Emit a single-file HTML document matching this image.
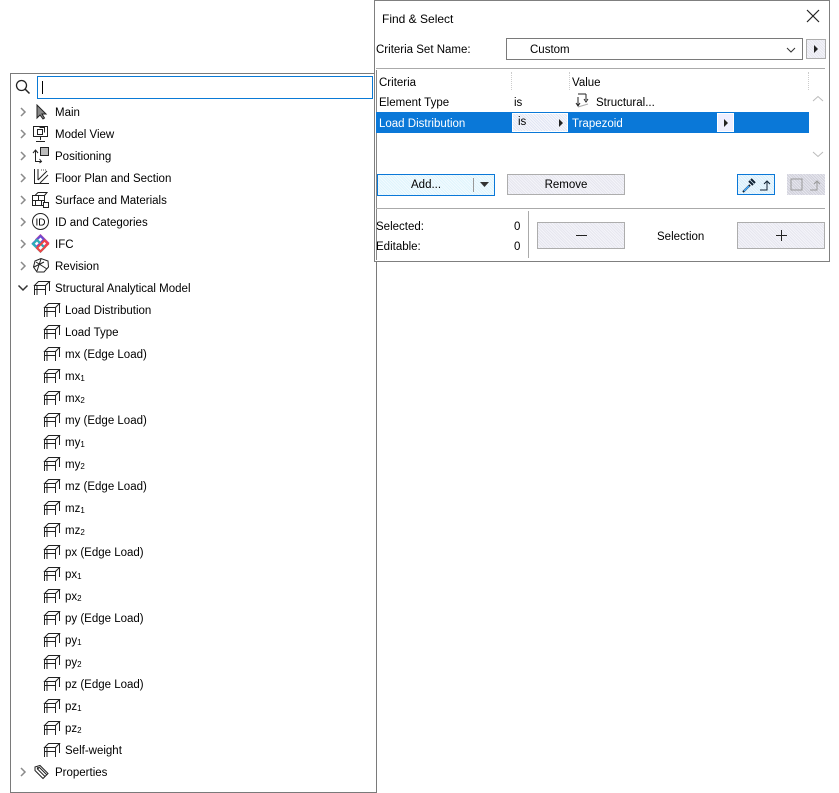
<!DOCTYPE html>
<html><head><meta charset="utf-8"><style>
*{box-sizing:border-box;margin:0;padding:0}
body{width:839px;height:784px;background:#fff;position:relative;overflow:hidden;font-family:"Liberation Sans",sans-serif;font-size:11.5px;color:#000}
.a{position:absolute;white-space:nowrap}
.panel{position:absolute;left:10px;top:73px;width:367px;height:720px;border:1px solid #7a7a7a;background:#fff}
.row{position:absolute;height:22px;line-height:22px;margin-top:1px}
.t{margin-top:1px}
.ico{position:absolute}
.dlg{position:absolute;left:374px;top:0;width:456px;height:262px;background:#fff;border:1px solid #7f7f7f}
.btn{position:absolute;border:1px solid #adadad;background:repeating-linear-gradient(45deg,#e6e6ee 0 1px,#f4f4fa 1px 2px);text-align:center}
sub{font-size:8px;vertical-align:-1px}
</style></head><body>
<div class="panel"></div>
<div class="a" style="left:15px;top:79px"><svg width="16" height="16"><circle cx="6.5" cy="6.5" r="5" fill="none" stroke="#222" stroke-width="1.3"/><path d="M10 10 L14.5 14.5" stroke="#222" stroke-width="1.5"/></svg></div>
<div class="a" style="left:37px;top:76px;width:336px;height:23px;border:1px solid #0a7ad6;background:#fff"><div style="position:absolute;left:4px;top:4px;width:1px;height:13px;background:#000"></div></div>

<svg class="ico" style="left:19px;top:106px" width="8" height="12"><path d="M2 2 L6 6 L2 10" fill="none" stroke="#8a8a8a" stroke-width="1.5"/></svg>
<svg class="ico" style="left:35px;top:104px" width="14" height="16"><path d="M2 1 L2 14 L5 11 L8 15 L9.5 14 L7 10 L11 10 Z" fill="#888" stroke="#222" stroke-width="1"/></svg>
<div class="a row" style="left:55px;top:101px">Main</div>

<svg class="ico" style="left:19px;top:128px" width="8" height="12"><path d="M2 2 L6 6 L2 10" fill="none" stroke="#8a8a8a" stroke-width="1.5"/></svg>
<svg class="ico" style="left:32px;top:125px" width="18" height="18"><rect x="1.5" y="1.5" width="14" height="10" fill="none" stroke="#222"/><rect x="5.5" y="4.5" width="5" height="5" fill="none" stroke="#222"/><path d="M7.5 2.5 h5 v5" fill="none" stroke="#222"/><path d="M8.5 11.5 V15 M4 16.5 H13" stroke="#222"/></svg>
<div class="a row" style="left:55px;top:123px">Model View</div>

<svg class="ico" style="left:19px;top:150px" width="8" height="12"><path d="M2 2 L6 6 L2 10" fill="none" stroke="#8a8a8a" stroke-width="1.5"/></svg>
<svg class="ico" style="left:32px;top:146px" width="18" height="18"><path d="M3.5 5 V15.5 H9 M1 7 L3.5 4 L6 7 M7.5 13 L9.5 15.5 L7.5 17" fill="none" stroke="#222"/><rect x="8.5" y="1.5" width="8" height="8" fill="#bbb" stroke="#222"/></svg>
<div class="a row" style="left:55px;top:145px">Positioning</div>

<svg class="ico" style="left:19px;top:172px" width="8" height="12"><path d="M2 2 L6 6 L2 10" fill="none" stroke="#8a8a8a" stroke-width="1.5"/></svg>
<svg class="ico" style="left:32px;top:168px" width="18" height="19"><path d="M2.5 1 V15.5 H17 M6 1 V12 M6 12 L15 3 M8 15 L16 7" fill="none" stroke="#222"/><path d="M9 2 h6" stroke="#555" stroke-dasharray="1 1"/></svg>
<div class="a row" style="left:55px;top:167px">Floor Plan and Section</div>

<svg class="ico" style="left:19px;top:194px" width="8" height="12"><path d="M2 2 L6 6 L2 10" fill="none" stroke="#8a8a8a" stroke-width="1.5"/></svg>
<svg class="ico" style="left:31px;top:190px" width="19" height="19"><path d="M1.5 5.5 H13.5 V15.5 H1.5 Z M1.5 10.5 H13.5 M7.5 5.5 V10.5 M4.5 10.5 V15.5 M10.5 10.5 V15.5 M4 5.5 L7 2.5 H16 L13.5 5.5" fill="none" stroke="#222"/><rect x="12.5" y="12.5" width="5" height="5" fill="#fff" stroke="#222"/></svg>
<div class="a row" style="left:55px;top:189px">Surface and Materials</div>

<svg class="ico" style="left:19px;top:216px" width="8" height="12"><path d="M2 2 L6 6 L2 10" fill="none" stroke="#8a8a8a" stroke-width="1.5"/></svg>
<svg class="ico" style="left:31px;top:212px" width="19" height="19"><circle cx="9.5" cy="9.5" r="8" fill="none" stroke="#222"/><text x="9.5" y="13.5" font-size="10" text-anchor="middle" font-family="Liberation Sans">ID</text></svg>
<div class="a row" style="left:55px;top:211px">ID and Categories</div>

<svg class="ico" style="left:19px;top:238px" width="8" height="12"><path d="M2 2 L6 6 L2 10" fill="none" stroke="#8a8a8a" stroke-width="1.5"/></svg>
<svg class="ico" style="left:31px;top:234px" width="19" height="19"><path d="M9.5 1.5 L17 9 L13 13 L5.5 5.5 Z" fill="none" stroke="#d23a9a" stroke-width="2.2"/><path d="M2 9.5 L9.5 2 L13 5.5 L5.5 13 Z" fill="none" stroke="#6a4bd0" stroke-width="2.2"/><path d="M9.5 17.5 L2 10 L6 6 L13.5 13.5 Z" fill="none" stroke="#2bb0b8" stroke-width="2.2"/><path d="M17 10 L9.5 17.5 L6 14 L13.5 6.5 Z" fill="none" stroke="#e44" stroke-width="2"/></svg>
<div class="a row" style="left:55px;top:233px">IFC</div>

<svg class="ico" style="left:19px;top:260px" width="8" height="12"><path d="M2 2 L6 6 L2 10" fill="none" stroke="#8a8a8a" stroke-width="1.5"/></svg>
<svg class="ico" style="left:32px;top:257px" width="18" height="17"><path d="M3 4 L9 1.5 L16 4 L16.5 10 L12 15 L5 15 L1.5 10 Z M4 5 L15 12 M9 2 L5 14 M2 10 L12 5" fill="none" stroke="#222"/></svg>
<div class="a row" style="left:55px;top:255px">Revision</div>

<svg class="ico" style="left:17px;top:284px" width="12" height="8"><path d="M1.5 1.5 L6 6 L10.5 1.5" fill="none" stroke="#333" stroke-width="1.5"/></svg>
<svg class="ico" style="left:33px;top:280px" width="18" height="16"><path d="M1.5 5.5 L5.5 1.5 H16.5 L12.5 5.5 Z M1.5 5.5 V15 M12.5 5.5 V15 M16.5 1.5 V11 M1.5 9.5 H12.5 M4 5.5 V15" fill="none" stroke="#222"/></svg>
<div class="a row" style="left:55px;top:277px">Structural Analytical Model</div>

<svg class="ico" style="left:43px;top:302px" width="18" height="16"><path d="M1.5 5.5 L5.5 1.5 H16.5 L12.5 5.5 Z M1.5 5.5 V15 M12.5 5.5 V15 M16.5 1.5 V11 M1.5 9.5 H12.5 M4 5.5 V15" fill="none" stroke="#222"/></svg><div class="a row" style="left:65px;top:299px">Load Distribution</div>
<svg class="ico" style="left:43px;top:324px" width="18" height="16"><path d="M1.5 5.5 L5.5 1.5 H16.5 L12.5 5.5 Z M1.5 5.5 V15 M12.5 5.5 V15 M16.5 1.5 V11 M1.5 9.5 H12.5 M4 5.5 V15" fill="none" stroke="#222"/></svg><div class="a row" style="left:65px;top:321px">Load Type</div>
<svg class="ico" style="left:43px;top:346px" width="18" height="16"><path d="M1.5 5.5 L5.5 1.5 H16.5 L12.5 5.5 Z M1.5 5.5 V15 M12.5 5.5 V15 M16.5 1.5 V11 M1.5 9.5 H12.5 M4 5.5 V15" fill="none" stroke="#222"/></svg><div class="a row" style="left:65px;top:343px">mx (Edge Load)</div>
<svg class="ico" style="left:43px;top:368px" width="18" height="16"><path d="M1.5 5.5 L5.5 1.5 H16.5 L12.5 5.5 Z M1.5 5.5 V15 M12.5 5.5 V15 M16.5 1.5 V11 M1.5 9.5 H12.5 M4 5.5 V15" fill="none" stroke="#222"/></svg><div class="a row" style="left:65px;top:365px">mx<sub>1</sub></div>
<svg class="ico" style="left:43px;top:390px" width="18" height="16"><path d="M1.5 5.5 L5.5 1.5 H16.5 L12.5 5.5 Z M1.5 5.5 V15 M12.5 5.5 V15 M16.5 1.5 V11 M1.5 9.5 H12.5 M4 5.5 V15" fill="none" stroke="#222"/></svg><div class="a row" style="left:65px;top:387px">mx<sub>2</sub></div>
<svg class="ico" style="left:43px;top:412px" width="18" height="16"><path d="M1.5 5.5 L5.5 1.5 H16.5 L12.5 5.5 Z M1.5 5.5 V15 M12.5 5.5 V15 M16.5 1.5 V11 M1.5 9.5 H12.5 M4 5.5 V15" fill="none" stroke="#222"/></svg><div class="a row" style="left:65px;top:409px">my (Edge Load)</div>
<svg class="ico" style="left:43px;top:434px" width="18" height="16"><path d="M1.5 5.5 L5.5 1.5 H16.5 L12.5 5.5 Z M1.5 5.5 V15 M12.5 5.5 V15 M16.5 1.5 V11 M1.5 9.5 H12.5 M4 5.5 V15" fill="none" stroke="#222"/></svg><div class="a row" style="left:65px;top:431px">my<sub>1</sub></div>
<svg class="ico" style="left:43px;top:456px" width="18" height="16"><path d="M1.5 5.5 L5.5 1.5 H16.5 L12.5 5.5 Z M1.5 5.5 V15 M12.5 5.5 V15 M16.5 1.5 V11 M1.5 9.5 H12.5 M4 5.5 V15" fill="none" stroke="#222"/></svg><div class="a row" style="left:65px;top:453px">my<sub>2</sub></div>
<svg class="ico" style="left:43px;top:478px" width="18" height="16"><path d="M1.5 5.5 L5.5 1.5 H16.5 L12.5 5.5 Z M1.5 5.5 V15 M12.5 5.5 V15 M16.5 1.5 V11 M1.5 9.5 H12.5 M4 5.5 V15" fill="none" stroke="#222"/></svg><div class="a row" style="left:65px;top:475px">mz (Edge Load)</div>
<svg class="ico" style="left:43px;top:500px" width="18" height="16"><path d="M1.5 5.5 L5.5 1.5 H16.5 L12.5 5.5 Z M1.5 5.5 V15 M12.5 5.5 V15 M16.5 1.5 V11 M1.5 9.5 H12.5 M4 5.5 V15" fill="none" stroke="#222"/></svg><div class="a row" style="left:65px;top:497px">mz<sub>1</sub></div>
<svg class="ico" style="left:43px;top:522px" width="18" height="16"><path d="M1.5 5.5 L5.5 1.5 H16.5 L12.5 5.5 Z M1.5 5.5 V15 M12.5 5.5 V15 M16.5 1.5 V11 M1.5 9.5 H12.5 M4 5.5 V15" fill="none" stroke="#222"/></svg><div class="a row" style="left:65px;top:519px">mz<sub>2</sub></div>
<svg class="ico" style="left:43px;top:544px" width="18" height="16"><path d="M1.5 5.5 L5.5 1.5 H16.5 L12.5 5.5 Z M1.5 5.5 V15 M12.5 5.5 V15 M16.5 1.5 V11 M1.5 9.5 H12.5 M4 5.5 V15" fill="none" stroke="#222"/></svg><div class="a row" style="left:65px;top:541px">px (Edge Load)</div>
<svg class="ico" style="left:43px;top:566px" width="18" height="16"><path d="M1.5 5.5 L5.5 1.5 H16.5 L12.5 5.5 Z M1.5 5.5 V15 M12.5 5.5 V15 M16.5 1.5 V11 M1.5 9.5 H12.5 M4 5.5 V15" fill="none" stroke="#222"/></svg><div class="a row" style="left:65px;top:563px">px<sub>1</sub></div>
<svg class="ico" style="left:43px;top:588px" width="18" height="16"><path d="M1.5 5.5 L5.5 1.5 H16.5 L12.5 5.5 Z M1.5 5.5 V15 M12.5 5.5 V15 M16.5 1.5 V11 M1.5 9.5 H12.5 M4 5.5 V15" fill="none" stroke="#222"/></svg><div class="a row" style="left:65px;top:585px">px<sub>2</sub></div>
<svg class="ico" style="left:43px;top:610px" width="18" height="16"><path d="M1.5 5.5 L5.5 1.5 H16.5 L12.5 5.5 Z M1.5 5.5 V15 M12.5 5.5 V15 M16.5 1.5 V11 M1.5 9.5 H12.5 M4 5.5 V15" fill="none" stroke="#222"/></svg><div class="a row" style="left:65px;top:607px">py (Edge Load)</div>
<svg class="ico" style="left:43px;top:632px" width="18" height="16"><path d="M1.5 5.5 L5.5 1.5 H16.5 L12.5 5.5 Z M1.5 5.5 V15 M12.5 5.5 V15 M16.5 1.5 V11 M1.5 9.5 H12.5 M4 5.5 V15" fill="none" stroke="#222"/></svg><div class="a row" style="left:65px;top:629px">py<sub>1</sub></div>
<svg class="ico" style="left:43px;top:654px" width="18" height="16"><path d="M1.5 5.5 L5.5 1.5 H16.5 L12.5 5.5 Z M1.5 5.5 V15 M12.5 5.5 V15 M16.5 1.5 V11 M1.5 9.5 H12.5 M4 5.5 V15" fill="none" stroke="#222"/></svg><div class="a row" style="left:65px;top:651px">py<sub>2</sub></div>
<svg class="ico" style="left:43px;top:676px" width="18" height="16"><path d="M1.5 5.5 L5.5 1.5 H16.5 L12.5 5.5 Z M1.5 5.5 V15 M12.5 5.5 V15 M16.5 1.5 V11 M1.5 9.5 H12.5 M4 5.5 V15" fill="none" stroke="#222"/></svg><div class="a row" style="left:65px;top:673px">pz (Edge Load)</div>
<svg class="ico" style="left:43px;top:698px" width="18" height="16"><path d="M1.5 5.5 L5.5 1.5 H16.5 L12.5 5.5 Z M1.5 5.5 V15 M12.5 5.5 V15 M16.5 1.5 V11 M1.5 9.5 H12.5 M4 5.5 V15" fill="none" stroke="#222"/></svg><div class="a row" style="left:65px;top:695px">pz<sub>1</sub></div>
<svg class="ico" style="left:43px;top:720px" width="18" height="16"><path d="M1.5 5.5 L5.5 1.5 H16.5 L12.5 5.5 Z M1.5 5.5 V15 M12.5 5.5 V15 M16.5 1.5 V11 M1.5 9.5 H12.5 M4 5.5 V15" fill="none" stroke="#222"/></svg><div class="a row" style="left:65px;top:717px">pz<sub>2</sub></div>
<svg class="ico" style="left:43px;top:742px" width="18" height="16"><path d="M1.5 5.5 L5.5 1.5 H16.5 L12.5 5.5 Z M1.5 5.5 V15 M12.5 5.5 V15 M16.5 1.5 V11 M1.5 9.5 H12.5 M4 5.5 V15" fill="none" stroke="#222"/></svg><div class="a row" style="left:65px;top:739px">Self-weight</div>
<svg class="ico" style="left:19px;top:766px" width="8" height="12"><path d="M2 2 L6 6 L2 10" fill="none" stroke="#8a8a8a" stroke-width="1.5"/></svg>
<svg class="ico" style="left:33px;top:764px" width="17" height="16"><path d="M2 3 L7 1.5 L15 9.5 L10 14.5 L2 6.5 Z M4 4.5 L12 12.5 M6 3 L14 11" fill="none" stroke="#222"/><circle cx="5" cy="4" r="1" fill="#222"/></svg>
<div class="a row" style="left:55px;top:761px">Properties</div>

<!-- dialog -->
<div class="dlg"></div>
<div class="a t" style="left:382px;top:11px;font-size:12px">Find &amp; Select</div>
<svg class="a" style="left:806px;top:9px" width="14" height="14"><path d="M1 1 L13 13 M13 1 L1 13" stroke="#222" stroke-width="1.2"/></svg>
<div class="a t" style="left:376px;top:43px">Criteria Set Name:</div>
<div class="a" style="left:506px;top:38px;width:297px;height:22px;border:1px solid #7a7a7a;background:#fff"><span class="a" style="left:23px;top:5px">Custom</span><svg class="a" style="left:279px;top:7px" width="10" height="8"><path d="M1 2 L5 6 L9 2" fill="none" stroke="#333"/></svg></div>
<div class="btn" style="left:806px;top:39px;width:20px;height:20px"><svg class="a" style="left:6px;top:4px" width="6" height="10"><path d="M1 1 L5 5 L1 9Z" fill="#222"/></svg></div>
<div class="a" style="left:376px;top:68px;width:449px;height:1px;background:#aaa"></div>
<div class="a" style="left:376px;top:70px;width:1px;height:190px;background:#888"></div>
<div class="a t" style="left:379px;top:76px">Criteria</div>
<div class="a" style="left:511px;top:72px;width:1px;height:18px;border-left:1px dotted #ccc"></div>
<div class="a" style="left:569px;top:72px;width:1px;height:18px;border-left:1px dotted #ccc"></div>
<div class="a" style="left:808px;top:72px;width:1px;height:18px;border-left:1px dotted #ccc"></div>
<div class="a t" style="left:572px;top:76px">Value</div>
<div class="a t" style="left:379px;top:96px">Element Type</div>
<div class="a t" style="left:514px;top:96px">is</div>
<svg class="a" style="left:574px;top:91px" width="18" height="18"><path d="M4 6 V14 M12 3 V9 M4 3 H12 M2 12 L4 15 L6 12 M10 8 L12 11 L14 8" fill="none" stroke="#222"/><path d="M4 16 L14 13" stroke="#aaa"/></svg>
<div class="a t" style="left:596px;top:96px">Structural...</div>
<div class="a" style="left:376px;top:112px;width:433px;height:21px;background:#0a78d8"></div>
<div class="a t" style="left:379px;top:117px;color:#fff">Load Distribution</div>
<div class="a" style="left:512px;top:113px;width:56px;height:19px;border:1px solid #fff;background:repeating-linear-gradient(45deg,#e2e6f4 0 1px,#f6f7fc 1px 2px)"><span class="a" style="left:5px;top:2px">is</span><svg class="a" style="left:45px;top:4px" width="6" height="10"><path d="M1 1 L5 5 L1 9Z" fill="#222"/></svg></div>
<div class="a t" style="left:572px;top:117px;color:#fff">Trapezoid</div>
<div class="a" style="left:717px;top:113px;width:17px;height:19px;border:1px solid #fff;background:#eef"><svg class="a" style="left:5px;top:4px" width="6" height="10"><path d="M1 1 L5 5 L1 9Z" fill="#222"/></svg></div>
<svg class="a" style="left:812px;top:95px" width="12" height="8"><path d="M1 6 L6 1.5 L11 6" fill="none" stroke="#bbb"/></svg>
<svg class="a" style="left:812px;top:150px" width="12" height="8"><path d="M1 2 L6 6.5 L11 2" fill="none" stroke="#bbb"/></svg>
<div class="btn" style="left:377px;top:174px;width:118px;height:22px;border-color:#0a78d8;background:repeating-linear-gradient(45deg,#dff4fc 0 1px,#f2fbff 1px 2px)"><span class="a" style="left:33px;top:4px">Add...</span><div class="a" style="left:95px;top:3px;width:1px;height:14px;background:#999"></div><svg class="a" style="left:102px;top:7px" width="9" height="6"><path d="M0 0 H9 L4.5 5Z" fill="#333"/></svg></div>
<div class="btn" style="left:507px;top:174px;width:118px;height:21px"><span style="line-height:21px">Remove</span></div>
<div class="btn" style="left:737px;top:174px;width:38px;height:21px;border-color:#0a78d8;background:repeating-linear-gradient(45deg,#d8eefa 0 1px,#eef8ff 1px 2px)"><svg class="a" style="left:2px;top:1px" width="34" height="18"><path d="M3 16 L10 9 M9 5 L13 9 M11 3 L15 7" stroke="#123" stroke-width="2"/><path d="M4 15 L9 10" stroke="#4af" stroke-width="1.5"/><path d="M20 14 H27 V6 M24 8 L27 5 L30 8" fill="none" stroke="#123"/></svg></div>
<div class="btn" style="left:787px;top:174px;width:38px;height:21px;border:none;background:repeating-linear-gradient(45deg,#d0d0da 0 1px,#e6e6ee 1px 2px)"><svg class="a" style="left:1px;top:2px" width="36" height="18"><rect x="3" y="3" width="11" height="11" fill="none" stroke="#999"/><path d="M22 14 H29 V6 M26 8 L29 5 L32 8" fill="none" stroke="#999"/></svg></div>
<div class="a" style="left:376px;top:208px;width:449px;height:1px;background:#aaa"></div>
<div class="a t" style="left:376px;top:220px">Selected:</div>
<div class="a t" style="left:514px;top:220px">0</div>
<div class="a t" style="left:376px;top:240px">Editable:</div>
<div class="a t" style="left:514px;top:240px">0</div>
<div class="a" style="left:528px;top:211px;width:1px;height:47px;background:#aaa"></div>
<div class="btn" style="left:537px;top:222px;width:88px;height:27px"><div class="a" style="left:38px;top:12px;width:11px;height:1px;background:#222"></div></div>
<div class="a t" style="left:657px;top:230px">Selection</div>
<div class="btn" style="left:737px;top:222px;width:88px;height:27px"><div class="a" style="left:38px;top:12px;width:11px;height:1px;background:#222"></div><div class="a" style="left:43px;top:7px;width:1px;height:11px;background:#222"></div></div>
</body></html>
